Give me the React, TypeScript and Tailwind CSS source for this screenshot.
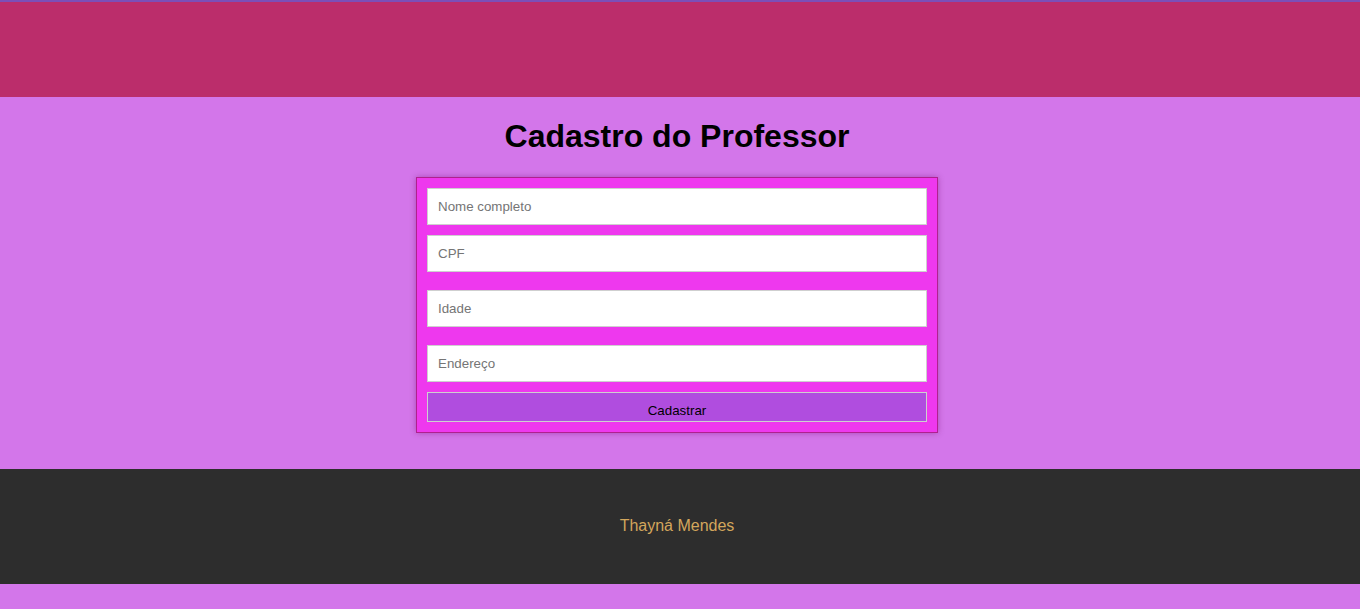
export default function App() {
  const fields = [
    { ph: "Nome completo", mt: "mt-0" },
    { ph: "CPF", mt: "mt-[10px]" },
    { ph: "Idade", mt: "mt-[18px]" },
    { ph: "Endereço", mt: "mt-[18px]" },
  ];

  return (
    <div className="min-h-[609px] bg-[#d376ea] font-['Liberation_Sans',Arial,sans-serif]">
      {/* Header */}
      <header className="h-[97px] bg-[#bb2d6b] border-t-2 border-[#7b4fb8]" />

      {/* Main */}
      <main className="flex flex-col items-center pr-[6px]">
        <h1 className="mt-[21px] mb-[22px] h-[37px] text-[32px] leading-[37px] font-bold text-black">
          Cadastro do Professor
        </h1>

        <form
          className="flex w-[522px] flex-col border border-[#b0208f] bg-[#ee38ee] p-[10px] shadow-[0_0_6px_rgba(120,20,110,0.45)]"
          onSubmit={(e) => e.preventDefault()}
        >
          {fields.map((f) => (
            <input
              key={f.ph}
              type="text"
              placeholder={f.ph}
              className={`${f.mt} h-[37px] w-[500px] border border-[#cfcfcf] bg-white px-[10px] text-[13.33px] text-black outline-none placeholder:text-[#757575]`}
            />
          ))}
          <button
            type="submit"
            className="mt-[10px] h-[30px] w-[500px] border border-[#cfcfcf] bg-[#b04ddf] pt-[6px] text-[13.33px] leading-[15px] text-black"
          >
            Cadastrar
          </button>
        </form>
      </main>

      {/* Footer */}
      <footer className="mt-[36px] flex h-[115px] items-center justify-center bg-[#2d2d2d] pr-[6px] pb-[2px]">
        <p className="text-[16px] text-[#d3a65c]">Thayná Mendes</p>
      </footer>
    </div>
  );
}
